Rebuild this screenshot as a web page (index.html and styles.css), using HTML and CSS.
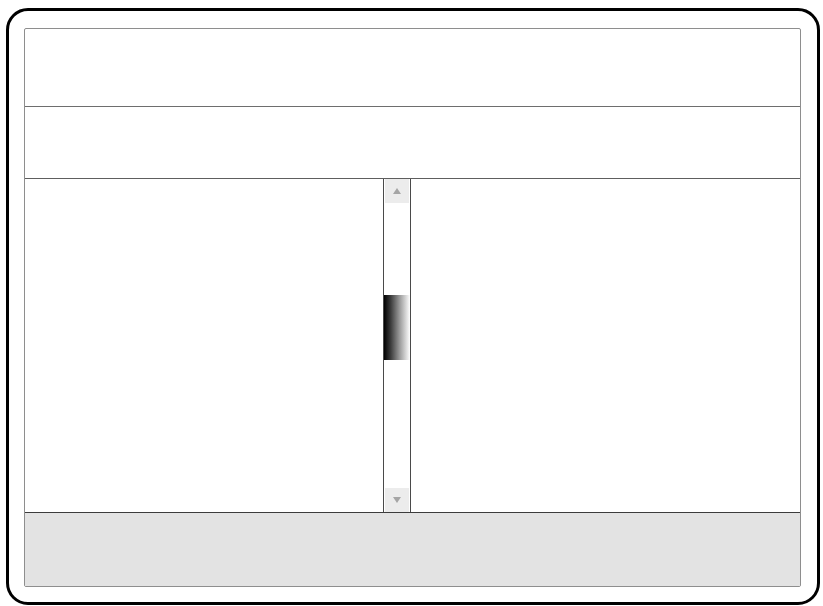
FILE: index.html
```html
<!DOCTYPE html>
<html>
<head>
<meta charset="utf-8">
<link rel="stylesheet" href="styles.css">
</head>
<body>
<div class="device">
  <div class="frame">
    <div class="header"></div>
    <div class="subheader"></div>
    <div class="main">
      <div class="pane"></div>
      <div class="scrollbar">
        <div class="sb-btn"><span class="tri up"></span></div>
        <div class="sb-track">
          <div class="sb-thumb"></div>
        </div>
        <div class="sb-btn"><span class="tri down"></span></div>
      </div>
      <div class="pane"></div>
    </div>
    <div class="footer"></div>
  </div>
</div>
</body>
</html>
```
FILE: styles.css
```css
* { box-sizing: border-box; }
html, body { margin: 0; padding: 0; background: #fff; }
body { font-family: "Liberation Sans", Arial, sans-serif; width: 823px; height: 606px; overflow: hidden; }

.device {
  margin: 8px 0 0 6px;
  width: 814px;
  height: 597px;
  border: 3px solid #000;
  border-radius: 22px;
  padding: 17px 16px 15px 15px;
  display: flex;
}

.frame {
  flex: 1;
  display: flex;
  flex-direction: column;
  border: 1px solid #8e8e8e;
  border-radius: 2px;
}

.header {
  height: 78px;
  border-bottom: 1px solid #6e6e6e;
}

.subheader {
  height: 72px;
  border-bottom: 1px solid #5e5e5e;
}

.main {
  flex: 1;
  display: flex;
}

.pane { flex: 1; }
.main .pane:first-child { flex: 0 0 358px; }

.scrollbar {
  width: 28px;
  border-left: 1px solid #4a4a4a;
  border-right: 1px solid #4a4a4a;
  display: flex;
  flex-direction: column;
}

.sb-btn {
  height: 24px;
  margin: 0 1px;
  background: #ececec;
  display: flex;
  align-items: center;
  justify-content: center;
}

.tri {
  width: 0;
  height: 0;
  border-left: 4px solid transparent;
  border-right: 4px solid transparent;
}
.tri.up { border-bottom: 6px solid #a5a5a5; }
.tri.down { border-top: 6px solid #a5a5a5; }

.sb-track {
  flex: 1;
  padding-top: 92px;
}

.sb-thumb {
  height: 65px;
  background: linear-gradient(to right, #000 0%, #3a3a3a 25%, #9a9a9a 60%, #fff 100%);
}

.footer {
  height: 74px;
  background: #e3e3e3;
  border-top: 1px solid #3c3c3c;
}
```
